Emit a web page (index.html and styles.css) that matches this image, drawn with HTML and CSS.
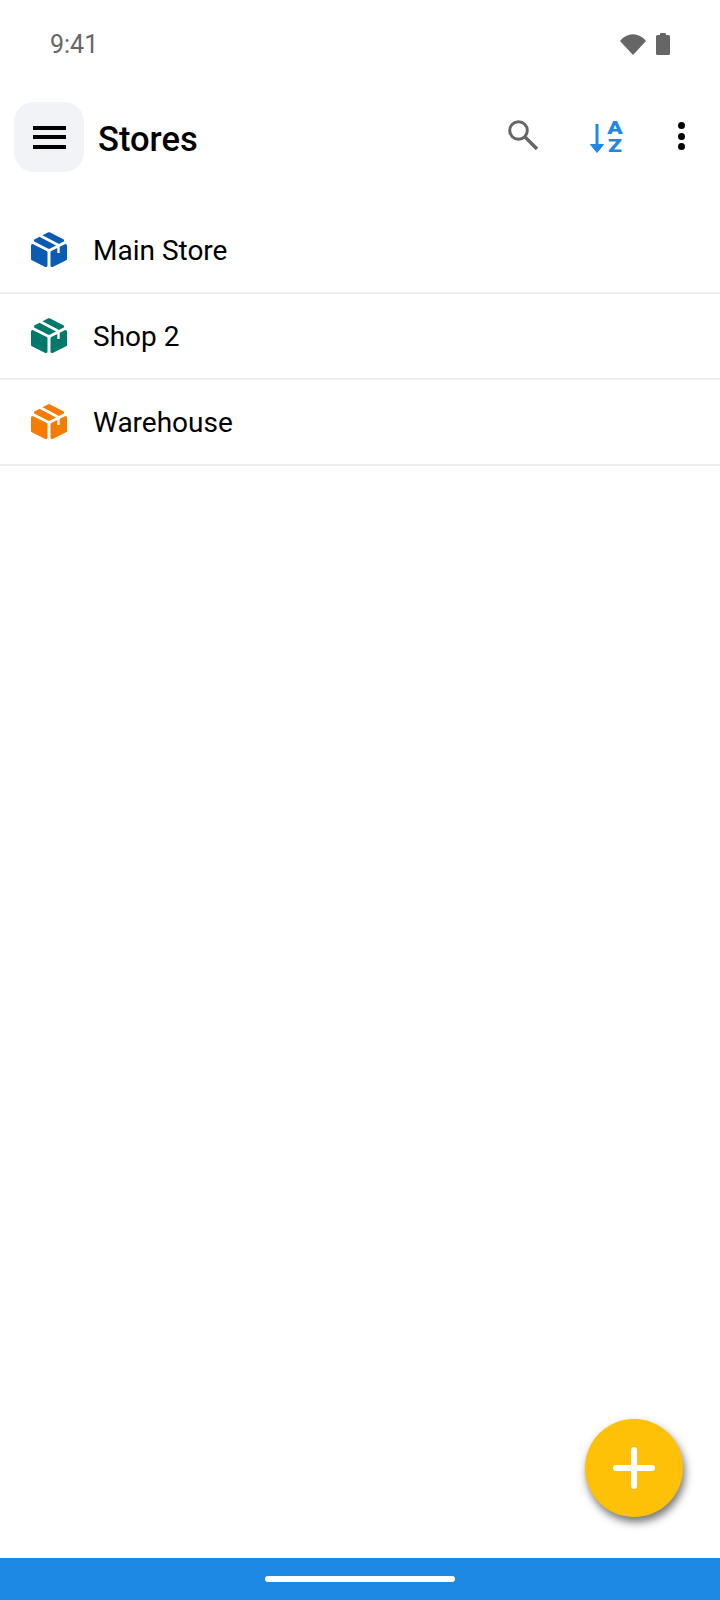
FILE: index.html
```html
<!DOCTYPE html>
<html lang="en">
<head>
  <meta charset="UTF-8">
  <meta name="viewport" content="width=device-width, initial-scale=1.0">
  <title>Stores</title>
  <link rel="stylesheet" href="styles.css">
</head>
<body>
  <svg class="sprites" width="0" height="0">
    <symbol id="box" viewBox="0 0 36 36">
      <g fill="currentColor" stroke="currentColor" stroke-width="3" stroke-linejoin="round">
        <path d="M18 1.7 L31.6 8.5 L18 15.3 L4.4 8.5 Z"/>
        <path d="M1.5 13.5 L15 20.4 V33.6 L1.5 27 Z"/>
        <path d="M34.5 13.5 L21 20.4 V33.6 L34.5 27 Z"/>
      </g>
      <path d="M9 3.5 L27 13" stroke="#fff" stroke-width="2.6"/>
      <path d="M27.5 12 V21" stroke="#fff" stroke-width="2.4"/>
    </symbol>
  </svg>

  <div class="page">
    <!-- Status bar -->
    <div class="status-bar">
      <span class="clock">9:41</span>
      <div class="status-icons">
        <svg class="wifi" viewBox="0 0 26 21"><path d="M0 7 C7 -2 19 -2 26 7 L13 21 Z"/></svg>
        <svg class="battery" viewBox="0 0 14 22"><path d="M4 2 V1 Q4 0 5 0 H9 Q10 0 10 1 V2 H12.5 Q14 2 14 3.5 V20.5 Q14 22 12.5 22 H1.5 Q0 22 0 20.5 V3.5 Q0 2 1.5 2 Z"/></svg>
      </div>
    </div>

    <!-- Toolbar -->
    <div class="toolbar">
      <button class="menu-btn" type="button">
        <span class="menu-bar"></span>
        <span class="menu-bar"></span>
        <span class="menu-bar"></span>
      </button>
      <h1 class="title">Stores</h1>
      <div class="actions">
        <svg class="search-icon" viewBox="0 0 30 30">
          <circle cx="10.5" cy="10.5" r="8.8" fill="none" stroke="#666" stroke-width="3"/>
          <path d="M17 17 L29 29" stroke="#666" stroke-width="3.4"/>
        </svg>
        <div class="sort-icon">
          <svg class="sort-arrow" viewBox="0 0 14 29">
            <path d="M7 0 V24" stroke="#1e88e5" stroke-width="3"/>
            <path d="M0.5 20.5 H13.5 L7 28.5 Z" fill="#1e88e5" stroke="#1e88e5" stroke-linejoin="round"/>
          </svg>
          <div class="sort-letters"><span>A</span><span>Z</span></div>
        </div>
        <div class="kebab">
          <span class="dot"></span>
          <span class="dot"></span>
          <span class="dot"></span>
        </div>
      </div>
    </div>

    <!-- Stores -->
    <ul class="store-list">
      <li class="store-row">
        <svg class="store-icon blue"><use href="#box"/></svg>
        <span class="store-name">Main Store</span>
      </li>
      <li class="store-row">
        <svg class="store-icon teal"><use href="#box"/></svg>
        <span class="store-name">Shop 2</span>
      </li>
      <li class="store-row">
        <svg class="store-icon orange"><use href="#box"/></svg>
        <span class="store-name">Warehouse</span>
      </li>
    </ul>

    <button class="fab" type="button">
      <svg viewBox="0 0 42 42"><path d="M21 3 V39 M3 21 H39" stroke="#fff" stroke-width="6" stroke-linecap="round"/></svg>
    </button>

    <div class="nav-bar"><span class="nav-handle"></span></div>
  </div>
</body>
</html>
```

FILE: styles.css
```css
* {
  box-sizing: border-box;
}

body {
  margin: 0;
  font-family: 'Roboto', 'Liberation Sans', sans-serif;
  background-color: #fff;
}

.sprites {
  position: absolute;
}

.page {
  position: relative;
  display: flex;
  flex-direction: column;
  width: 720px;
  height: 1600px;
  overflow: hidden;
}

/* Status bar */
.status-bar {
  display: flex;
  justify-content: space-between;
  align-items: center;
  height: 88px;
  padding: 0 50px;
}

.clock {
  font-size: 25px;
  color: #666;
}

.status-icons {
  display: flex;
  align-items: center;
  gap: 10px;
}

.wifi {
  width: 26px;
  height: 21px;
  fill: #666;
}

.battery {
  width: 14px;
  height: 22px;
  fill: #666;
}

/* Toolbar */
.toolbar {
  display: flex;
  align-items: center;
  height: 98px;
  padding: 0 0 0 14px;
}

.menu-btn {
  display: flex;
  flex-direction: column;
  justify-content: center;
  align-items: center;
  gap: 5.5px;
  width: 70px;
  height: 70px;
  padding: 0;
  border: 0;
  border-radius: 20px;
  background-color: #f1f3f6;
}

.menu-bar {
  width: 33px;
  height: 4px;
  background-color: #000;
}

.title {
  margin: 3px 0 0 14px;
  font-size: 34.5px;
  font-weight: 500;
  color: #000;
}

.actions {
  display: flex;
  align-items: center;
  margin-left: auto;
  padding-right: 35px;
}

.search-icon {
  width: 30px;
  height: 30px;
  margin-bottom: 4px;
}

.sort-icon {
  display: flex;
  align-items: center;
  gap: 3px;
  margin-left: 52px;
}

.sort-arrow {
  width: 14px;
  height: 29px;
  margin-top: 2px;
}

.sort-letters {
  display: flex;
  flex-direction: column;
  align-items: center;
  width: 16px;
  font-size: 19px;
  font-weight: 900;
  line-height: 18px;
  color: #1e88e5;
  transform: scaleX(1.2);
}

.kebab {
  display: flex;
  flex-direction: column;
  gap: 3.5px;
  margin-left: 55px;
  margin-bottom: 2px;
}

.dot {
  width: 7px;
  height: 7px;
  border-radius: 50%;
  background-color: #000;
}

/* Stores list */
.store-list {
  margin: 22px 0 0;
  padding: 0;
  list-style: none;
}

.store-row {
  display: flex;
  align-items: center;
  height: 86px;
  padding-left: 31px;
  border-bottom: 2px solid #eee;
}

.store-icon {
  width: 36px;
  height: 36px;
}

.blue {
  color: #0a5cb2;
}

.teal {
  color: #00796b;
}

.orange {
  color: #f57c00;
}

.store-name {
  margin-left: 26px;
  font-size: 28px;
  color: #000;
}

/* Add button */
.fab {
  position: absolute;
  left: 585px;
  top: 1419px;
  display: flex;
  justify-content: center;
  align-items: center;
  width: 98px;
  height: 98px;
  padding: 0;
  border: 0;
  border-radius: 50%;
  background-color: #ffc107;
  box-shadow: 2px 5px 8px rgba(0, 0, 0, 0.55);
}

.fab svg {
  width: 42px;
  height: 42px;
}

/* Nav bar */
.nav-bar {
  display: flex;
  justify-content: center;
  align-items: center;
  height: 42px;
  margin-top: auto;
  background-color: #1e88e5;
}

.nav-handle {
  width: 190px;
  height: 6px;
  border-radius: 3px;
  background-color: #fff;
}
```
